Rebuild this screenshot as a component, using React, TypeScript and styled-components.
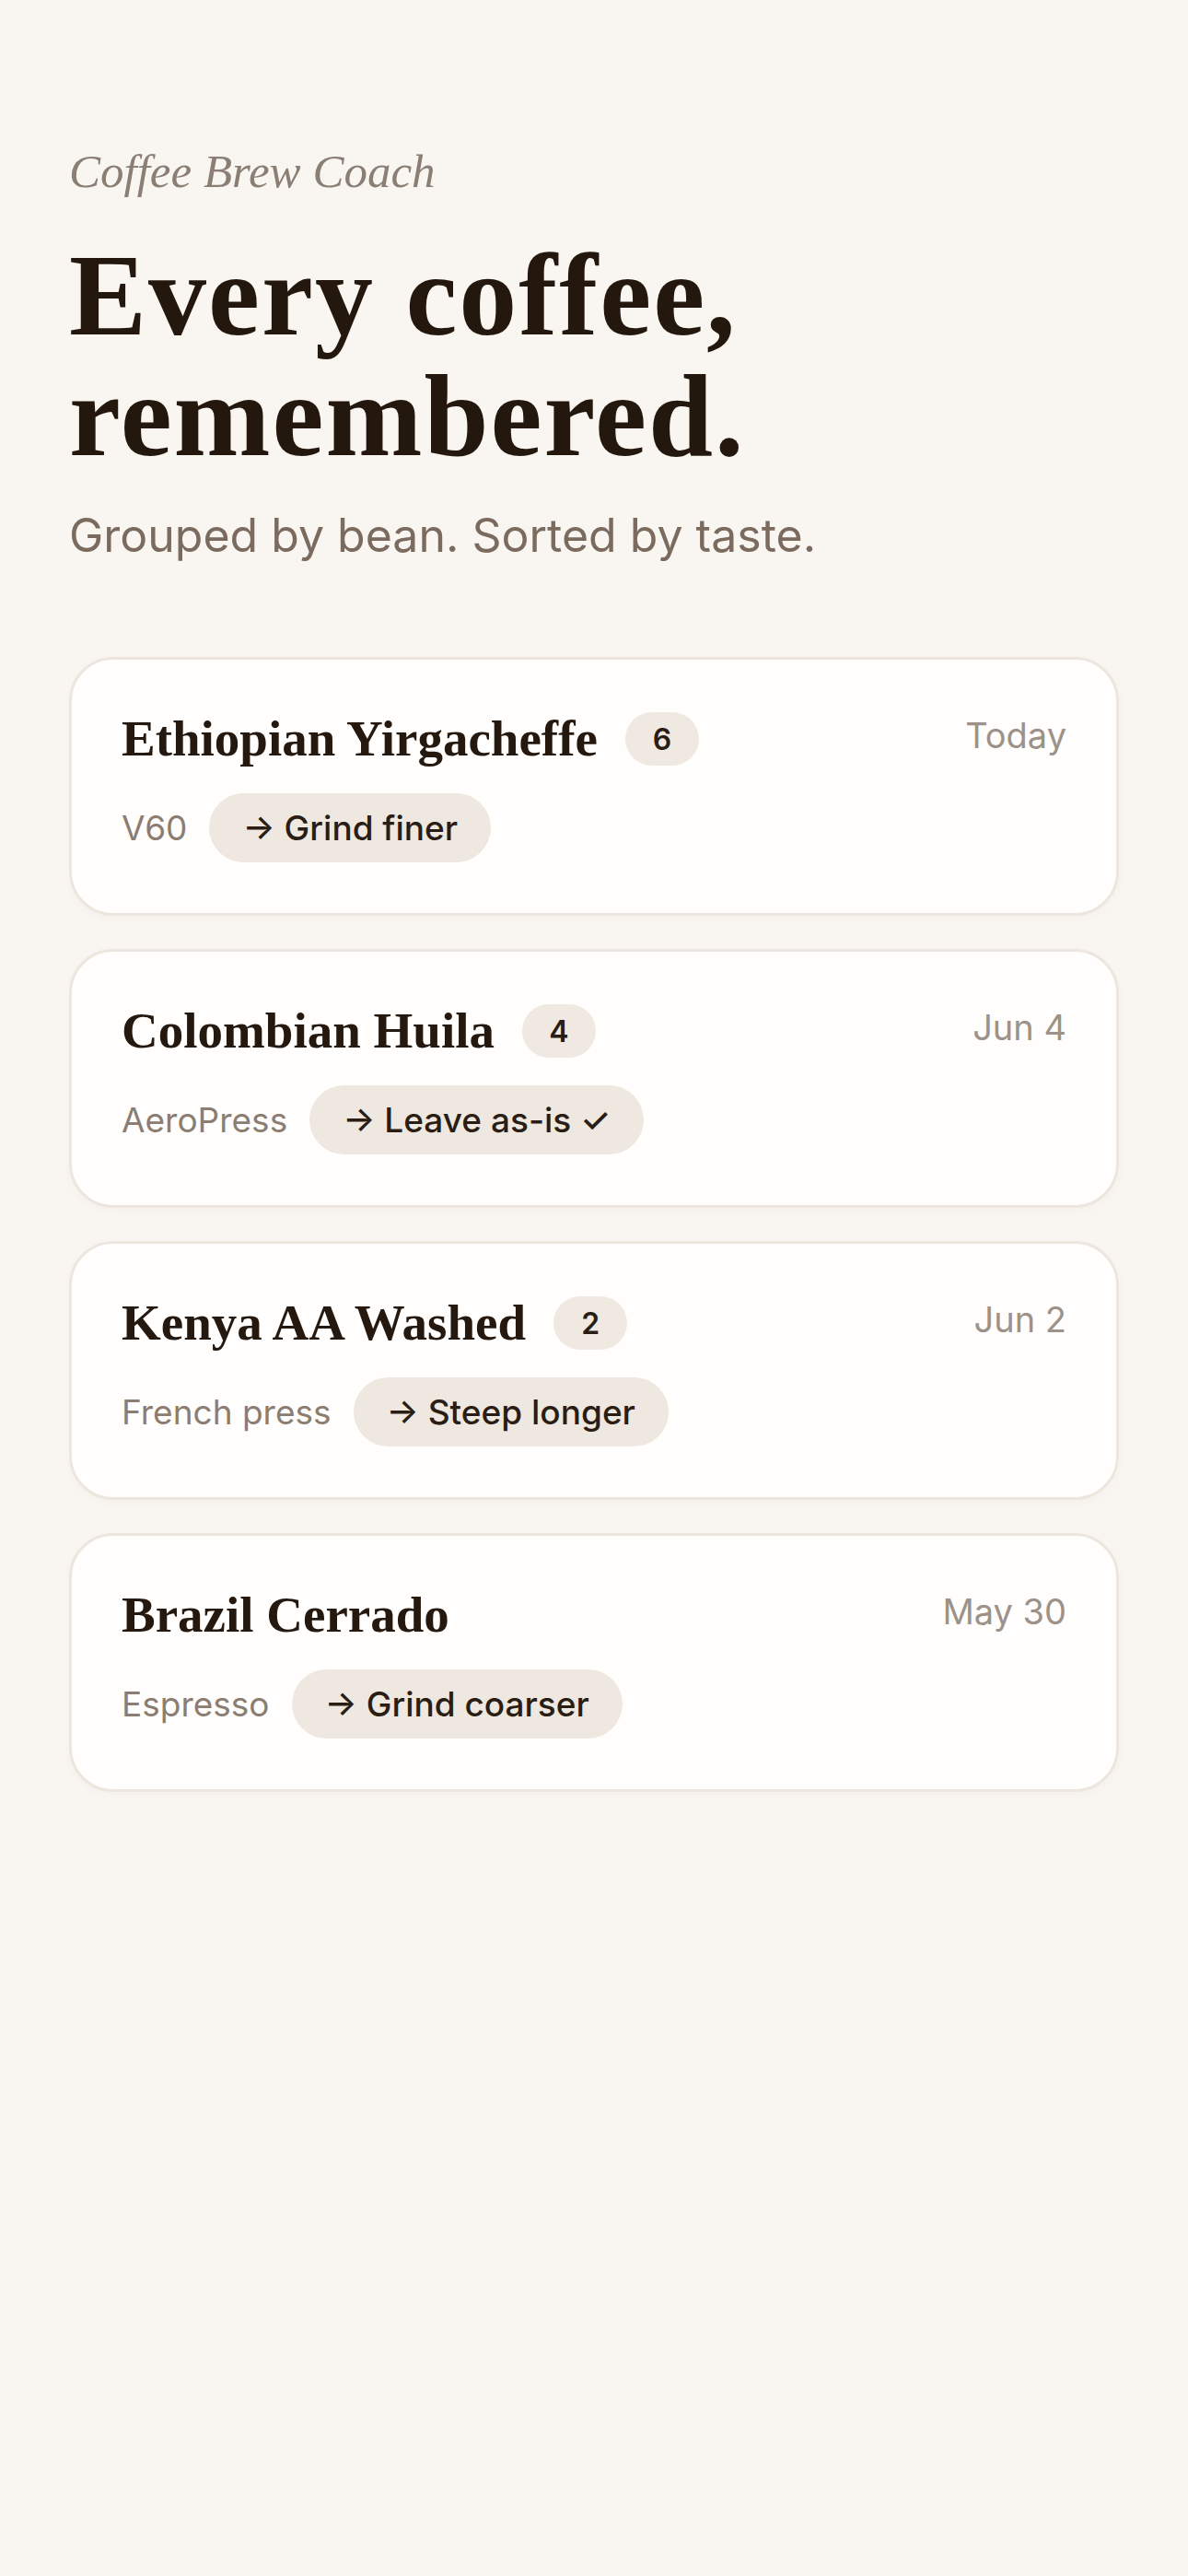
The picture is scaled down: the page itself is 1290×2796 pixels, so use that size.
import { createGlobalStyle, styled } from "styled-components";

type Brew = {
    bean: string;
    count?: number;
    date: string;
    method: string;
    advice: string;
};

const brews: Brew[] = [
    { bean: "Ethiopian Yirgacheffe", count: 6, date: "Today", method: "V60", advice: "→ Grind finer" },
    { bean: "Colombian Huila", count: 4, date: "Jun 4", method: "AeroPress", advice: "→ Leave as-is ✓" },
    { bean: "Kenya AA Washed", count: 2, date: "Jun 2", method: "French press", advice: "→ Steep longer" },
    { bean: "Brazil Cerrado", date: "May 30", method: "Espresso", advice: "→ Grind coarser" },
];

const App = () => {
    return (
        <>
            <GlobalStyle />
            <Page>
                <Eyebrow>Coffee Brew Coach</Eyebrow>
                <Heading>
                    Every coffee,
                    <br />
                    remembered.
                </Heading>
                <Subtitle>Grouped by bean. Sorted by taste.</Subtitle>

                <CardList>
                    {brews.map((brew) => (
                        <Card key={brew.bean}>
                            <TitleRow>
                                <BeanName>{brew.bean}</BeanName>
                                {brew.count !== undefined && <CountBadge>{brew.count}</CountBadge>}
                                <DateLabel>{brew.date}</DateLabel>
                            </TitleRow>
                            <MetaRow>
                                <Method>{brew.method}</Method>
                                <AdvicePill>{brew.advice}</AdvicePill>
                            </MetaRow>
                        </Card>
                    ))}
                </CardList>
            </Page>
        </>
    );
};

const GlobalStyle = createGlobalStyle`
    * {
        box-sizing: border-box;
    }
    html, body {
        margin: 0;
        padding: 0;
        background-color: #f9f6f1;
    }
`;

const Page = styled.main`
    min-height: 2796px;
    padding: 155px 75px 120px;
    display: flex;
    flex-direction: column;
`;

const Eyebrow = styled.p`
    margin: 0;
    font-family: "Liberation Serif", "Times New Roman", serif;
    font-style: italic;
    font-size: 51px;
    line-height: 62px;
    color: #8b7e74;
`;

const Heading = styled.h1`
    margin: 38px 0 0;
    font-family: "Liberation Serif", "Times New Roman", serif;
    font-weight: 700;
    font-size: 126px;
    line-height: 131px;
    letter-spacing: 2px;
    color: #24170e;
`;

const Subtitle = styled.p`
    margin: 29px 0 0;
    font-family: Inter, "Liberation Sans", sans-serif;
    font-size: 50px;
    line-height: 71px;
    color: #7b6b5f;
`;

const CardList = styled.section`
    margin-top: 96px;
    display: flex;
    flex-direction: column;
    gap: 36px;
`;

const Card = styled.article`
    background-color: #fffefc;
    border: 3px solid #ece6de;
    border-radius: 48px;
    padding: 54px 54px 55px;
    box-shadow: 0 3px 8px rgba(80, 55, 30, 0.03);
    display: flex;
    flex-direction: column;
    gap: 27px;
`;

const TitleRow = styled.div`
    height: 64px;
    display: flex;
    align-items: center;
    gap: 30px;
`;

const BeanName = styled.h2`
    margin: 0;
    font-family: "Liberation Serif", "Times New Roman", serif;
    font-weight: 700;
    font-size: 55px;
    line-height: 64px;
    color: #24180f;
`;

const CountBadge = styled.span`
    height: 58px;
    min-width: 80px;
    padding: 0 24px;
    border-radius: 29px;
    background-color: #efe9e2;
    display: inline-flex;
    align-items: center;
    justify-content: center;
    font-family: Inter, "Liberation Sans", sans-serif;
    font-weight: 600;
    font-size: 32px;
    color: #2a1d14;
`;

const DateLabel = styled.span`
    margin-left: auto;
    margin-bottom: 8px;
    font-family: Inter, "Liberation Sans", sans-serif;
    font-size: 38px;
    line-height: 47px;
    color: #9c928a;
`;

const MetaRow = styled.div`
    display: flex;
    align-items: center;
    gap: 24px;
`;

const Method = styled.span`
    font-family: Inter, "Liberation Sans", sans-serif;
    font-size: 37px;
    line-height: 47px;
    color: #8c7d72;
`;

const AdvicePill = styled.span`
    height: 75px;
    padding: 0 36px;
    border-radius: 38px;
    background-color: #efe8e0;
    display: inline-flex;
    align-items: center;
    font-family: Inter, "Liberation Sans", "DejaVu Sans", sans-serif;
    font-weight: 500;
    font-size: 37px;
    color: #2a1d14;
`;

export default App;
